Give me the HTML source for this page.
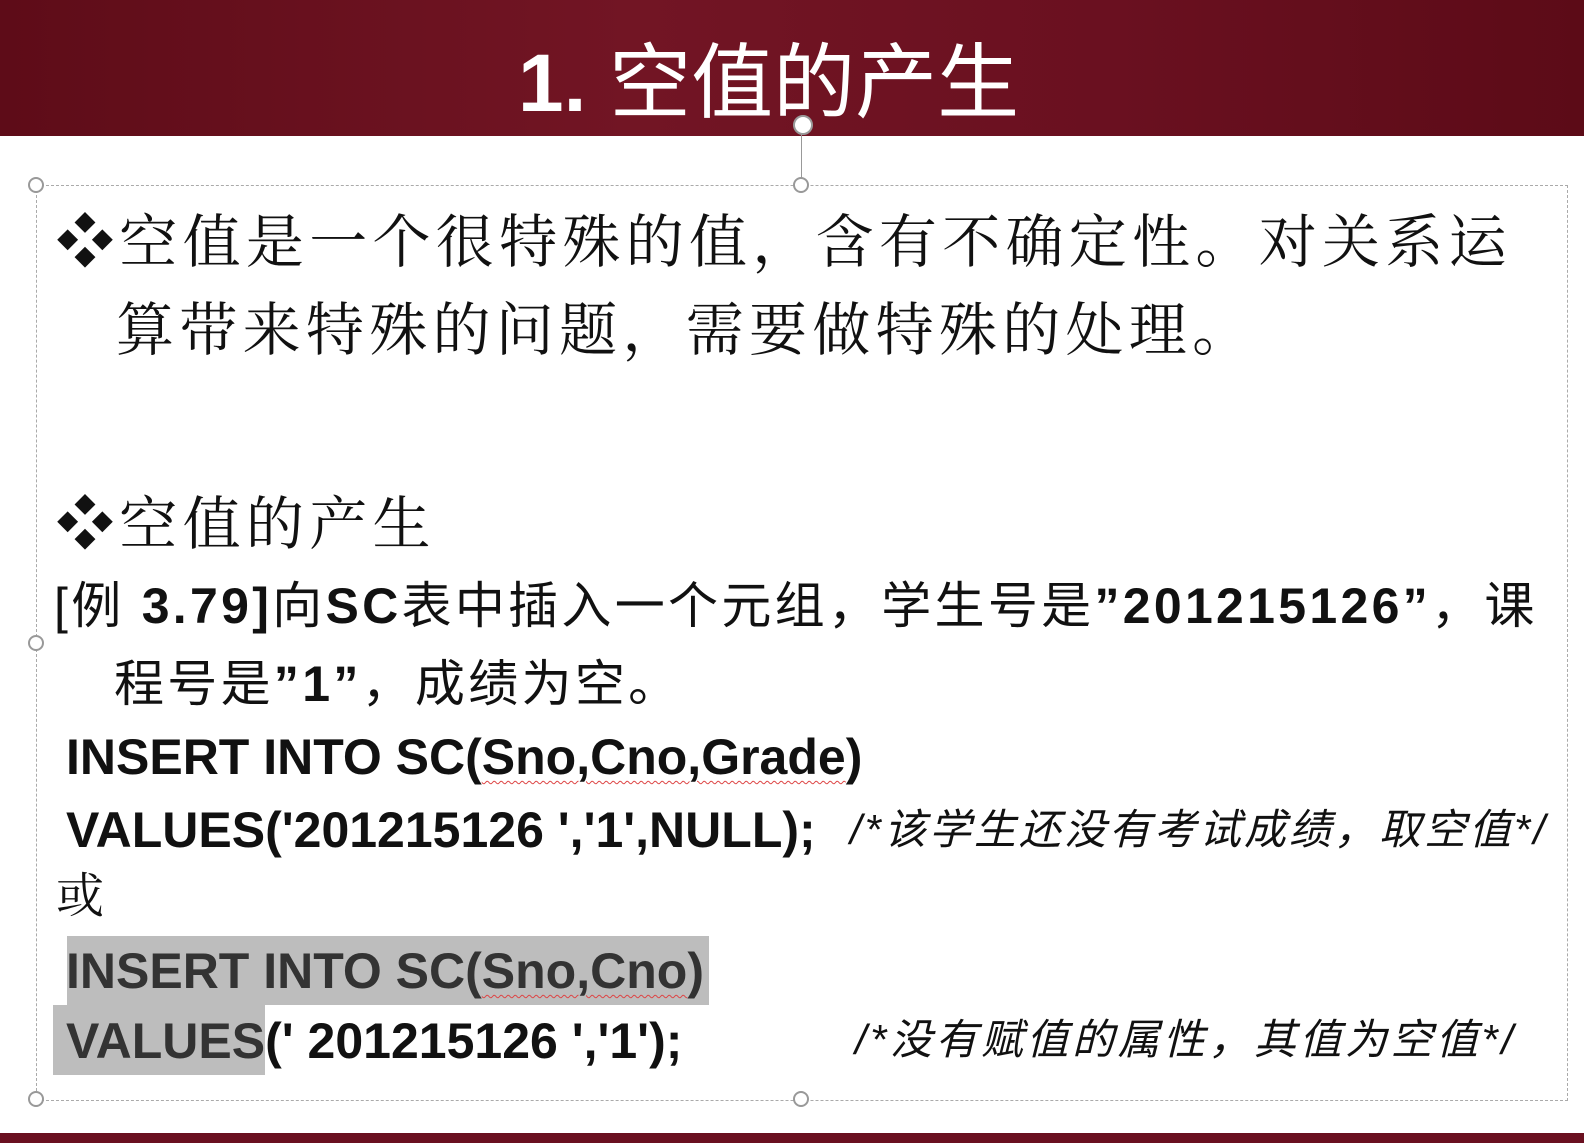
<!DOCTYPE html>
<html><head><meta charset="utf-8"><style>
body{margin:0;width:1584px;height:1143px;position:relative;overflow:hidden;background:#fff;font-family:"Liberation Sans","Noto Sans CJK SC",sans-serif;}
.hd{position:absolute;left:0;top:0;width:1584px;height:136px;background:linear-gradient(90deg,#5e0c18,#721524 40%,#6a1020 70%,#5c0b17);}
.ft{position:absolute;left:0;top:1133px;width:1584px;height:10px;background:#6a1020;}
.t{position:absolute;white-space:nowrap;color:#111;}
.song{font-family:"Liberation Serif","Noto Serif CJK SC",serif;}
.box{position:absolute;left:36px;top:185px;width:1530px;height:914px;border:1px dashed #aaa;}
.h{position:absolute;width:12px;height:12px;border:2px solid #999;border-radius:50%;background:#fff;}
.hl{position:absolute;background:#bdbdbd;}
.wav{text-decoration:underline wavy #d44;text-decoration-thickness:1px;text-underline-offset:6px;}
</style></head><body>
<div class="hd"></div>
<div class="t" style="left:518px;top:36px;font-size:82px;color:#fff;line-height:95px;"><b>1.</b> 空值的产生</div>
<div class="ft"></div>
<div class="box"></div>
<div style="position:absolute;left:801px;top:128px;width:1px;height:57px;background:#999"></div>
<div class="h" style="left:28px;top:177px"></div><div class="h" style="left:793px;top:177px"></div>
<div class="h" style="left:28px;top:635px"></div><div class="h" style="left:28px;top:1091px"></div><div class="h" style="left:793px;top:1091px"></div>
<div class="h" style="left:793px;top:115px;width:16px;height:16px"></div>
<div class="hl" style="left:67px;top:936px;width:642px;height:69px"></div>
<div class="hl" style="left:53px;top:1005px;width:212px;height:70px"></div>
<div class="t song" style="left:56px;top:208px;font-size:58px;line-height:70px;letter-spacing:5.3px">❖空值是一个很特殊的值，含有不确定性。对关系运</div>
<div class="t song" style="left:116px;top:296px;font-size:58px;line-height:70px;letter-spacing:5.3px">算带来特殊的问题，需要做特殊的处理。</div>
<div class="t song" style="left:56px;top:490px;font-size:58px;line-height:70px;letter-spacing:5.3px">❖空值的产生</div>
<div class="t" style="left:54px;top:577px;font-size:50px;line-height:58px;letter-spacing:3.3px">[例 <b>3.79]</b>向<b>SC</b>表中插入一个元组，学生号是<b>”201215126”</b>，课</div>
<div class="t" style="left:114px;top:655px;font-size:50px;line-height:58px;letter-spacing:3.3px">程号是<b>”1”</b>，成绩为空。</div>
<div class="t" style="left:66px;top:728px;font-size:50px;line-height:58px;font-weight:bold">INSERT INTO SC(<span class="wav">Sno,Cno,Grade</span>)</div>
<div class="t" style="left:66px;top:801px;font-size:50px;line-height:58px;font-weight:bold">VALUES('201215126 ','1',NULL);</div>
<div class="t" style="left:850px;top:804px;font-size:42px;line-height:52px;font-style:italic;letter-spacing:3px">/*该学生还没有考试成绩，取空值*/</div>
<div class="t song" style="left:56px;top:868px;font-size:48px;line-height:58px">或</div>
<div class="t" style="left:66px;top:942px;font-size:50px;line-height:58px;font-weight:bold;color:#333">INSERT INTO SC(<span class="wav">Sno,Cno</span>)</div>
<div class="t" style="left:66px;top:1012px;font-size:50px;line-height:58px;font-weight:bold"><span style="color:#333">VALUES</span>(' 201215126 ','1');</div>
<div class="t" style="left:855px;top:1014px;font-size:42px;line-height:52px;font-style:italic;letter-spacing:3.5px">/*没有赋值的属性，其值为空值*/</div>
</body></html>
